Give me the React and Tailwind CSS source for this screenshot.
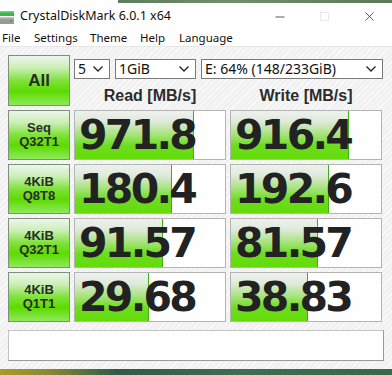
import { X, Minus, Square } from 'lucide-react'

const rows = [
  { l1: 'Seq', l2: 'Q32T1', read: '971.8', rw: 119, write: '916.4', ww: 118 },
  { l1: '4KiB', l2: 'Q8T8', read: '180.4', rw: 97, write: '192.6', ww: 98 },
  { l1: '4KiB', l2: 'Q32T1', read: '91.57', rw: 88, write: '81.57', ww: 87 },
  { l1: '4KiB', l2: 'Q1T1', read: '29.68', rw: 74, write: '38.83', ww: 77 },
]

const ui = { fontFamily: '"Noto Sans", "Open Sans", sans-serif' }
const bold = { fontFamily: '"Liberation Sans", Arial, sans-serif' }
const num = { fontFamily: '"DejaVu Sans", Verdana, sans-serif' }

function Chevron() {
  return (
    <svg width="10" height="6" viewBox="0 0 10 6" className="shrink-0">
      <polyline points="0.5,0.5 5,5 9.5,0.5" fill="none" stroke="#222" strokeWidth="1.3" />
    </svg>
  )
}

function Select({ w, text }) {
  return (
    <div
      className={`${w} h-[20px] bg-white border border-[#7a7a7a] flex items-center justify-between pl-[3px] pr-[6px] text-[14px] text-[#111]`}
      style={ui}
    >
      <span className="leading-none">{text}</span>
      <Chevron />
    </div>
  )
}

function GreenButton({ children, h }) {
  return (
    <div
      className={`w-[62px] ${h} shrink-0 border border-[#7d907a] bg-[linear-gradient(180deg,#eef5ec_0%,#c8eeb2_25%,#7fe23a_50%,#5ddb00_72%,#8fe95c_100%)] flex flex-col items-center justify-center text-[#2a2a2a] font-bold`}
      style={bold}
    >
      {children}
    </div>
  )
}

function Cell({ value, width }) {
  return (
    <div className="relative w-[152px] h-[50px] shrink-0 border border-[#b4b4b4] bg-white/90 overflow-hidden">
      <div
        className="absolute left-0 top-0 bottom-0 border-r border-[#3fae1a] bg-[linear-gradient(180deg,#eef1ee_0%,#dfeadb_22%,#a8e47e_48%,#6ddc1e_72%,#63dc08_100%)]"
        style={{ width }}
      />
      <div
        className="relative h-full flex items-center pl-[4px] text-[41px] font-bold tracking-[-2.7px] text-[#222] leading-none"
        style={num}
      >
        {value}
      </div>
    </div>
  )
}

export default function App() {
  return (
    <div className="w-[392px] h-[375px] overflow-hidden bg-white flex flex-col">
      {/* desktop edge */}
      <div className="h-[3px] bg-[linear-gradient(90deg,#ffffff_0,#ffffff_118px,#5f7d5c_118px,#6f8f6b_60%,#5a7a58_100%)]" />

      {/* title bar */}
      <div className="h-[27px] flex items-center" style={ui}>
        <svg width="15" height="16" viewBox="0 0 15 16" className="ml-0 mr-[5px] shrink-0">
          <rect x="0" y="2" width="14" height="5" fill="#3bb54a" />
          <rect x="0" y="2" width="14" height="1.5" fill="#6fd47a" />
          <rect x="0" y="8" width="14" height="7" fill="#9a9a9a" />
          <rect x="0" y="8" width="14" height="1.5" fill="#c4c4c4" />
          <rect x="10" y="11" width="2" height="2" fill="#3bb54a" />
        </svg>
        <span className="text-[12.5px] text-[#111] leading-none">CrystalDiskMark 6.0.1 x64</span>
        <div className="ml-auto flex items-center">
          <div className="w-[45px] flex justify-center">
            <Minus size={14} strokeWidth={1.2} color="#111" />
          </div>
          <div className="w-[45px] flex justify-center">
            <Square size={11} strokeWidth={1} color="#c8c8c8" />
          </div>
          <div className="w-[45px] flex justify-center">
            <X size={15} strokeWidth={1.1} color="#111" />
          </div>
        </div>
      </div>

      {/* menu */}
      <div className="h-[17px] flex items-center text-[11.5px] text-[#111] leading-none border-b border-[#e6e6e6]" style={ui}>
        <span className="ml-[2px] w-[32px]">File</span>
        <span className="w-[56px]">Settings</span>
        <span className="w-[50px]">Theme</span>
        <span className="w-[39px]">Help</span>
        <span>Language</span>
      </div>

      {/* main */}
      <div className="flex-1 px-[8px] pt-[8px] bg-[repeating-linear-gradient(135deg,#f1f1f1_0px,#f1f1f1_3px,#fbfbfb_3px,#fbfbfb_4px)]">
        <div className="flex gap-[4px]">
          <GreenButton h="h-[51px]">
            <span className="text-[17px] leading-none">All</span>
          </GreenButton>
          <div className="flex-1 flex flex-col pt-[4px] pb-[2px]">
            <div className="flex gap-[5px]">
              <Select w="w-[36px]" text="5" />
              <Select w="w-[81px]" text="1GiB" />
              <Select w="w-[182px]" text="E: 64% (148/233GiB)" />
            </div>
            <div className="mt-auto flex gap-[4px] items-end text-[16px] leading-none font-bold text-[#2c2c2c]" style={bold}>
              <div className="w-[152px] text-center">Read [MB/s]</div>
              <div className="w-[152px] text-center">Write [MB/s]</div>
            </div>
          </div>
        </div>

        {rows.map((r, i) => (
          <div key={i} className="flex gap-[4px] mt-[4px]">
            <GreenButton h="h-[50px]">
              <span className="text-[13px] leading-[14px]">{r.l1}</span>
              <span className="text-[13px] leading-[14px]">{r.l2}</span>
            </GreenButton>
            <Cell value={r.read} width={r.rw} />
            <Cell value={r.write} width={r.ww} />
          </div>
        ))}

        <div className="mt-[8px] h-[31px] border border-[#c4c4c4] border-b-[#9a9a9a] border-r-[#9a9a9a] bg-white/90" />
      </div>

      {/* desktop edge */}
      <div className="h-[6px] bg-[linear-gradient(90deg,#a89a2a_0%,#8c8a30_12%,#2f5a46_30%,#3f6e52_60%,#356a4a_100%)]" />
    </div>
  )
}
